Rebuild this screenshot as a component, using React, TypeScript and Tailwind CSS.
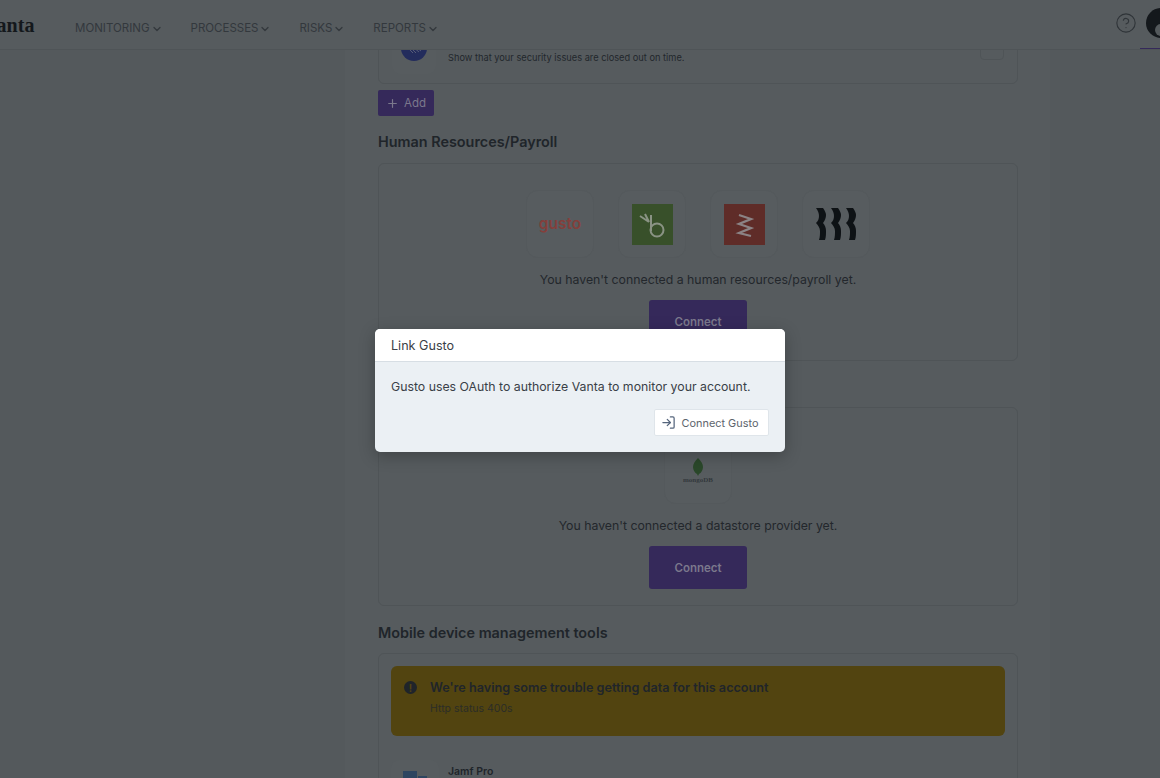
import { ChevronDown, CircleHelp, LogIn, Plus } from 'lucide-react';

const navItems = ['MONITORING', 'PROCESSES', 'RISKS', 'REPORTS'];

function Tile({ children }: { children: React.ReactNode }) {
  return (
    <div className="flex h-[68px] w-[68px] items-center justify-center rounded-xl border border-[#54595c] bg-[#575c5f]">
      {children}
    </div>
  );
}

function ConnectButton() {
  return (
    <button className="h-[43px] w-[98px] rounded-[3px] bg-[#35295a] pt-[3px] text-[11.5px] font-semibold text-[#7b788c]">
      Connect
    </button>
  );
}

function Heading({ children }: { children: React.ReactNode }) {
  return <h2 className="text-[14.4px] leading-[20px] font-semibold text-[#20252a]">{children}</h2>;
}

export default function App() {
  return (
    <div className="relative h-[778px] w-[1160px] overflow-hidden bg-[#54595c] font-['Inter',sans-serif]">
      <header className="relative z-10 flex h-[50px] items-center border-b border-[#4f5457] bg-[#565b5e]">
        <div className="-ml-[16px] w-[51px] font-['Liberation_Serif',serif] text-[20px] leading-none font-bold text-[#14181c]">
          Vanta
        </div>
        <nav className="mt-[9px] ml-[40px] flex gap-[28px]">
          {navItems.map((label) => (
            <div key={label} className="flex items-center text-[11.5px] text-[#33383d]">
              {label}
              <ChevronDown size={12} strokeWidth={2.5} className="ml-[1px]" />
            </div>
          ))}
        </nav>
        <div className="ml-auto flex items-center">
          <CircleHelp size={22} strokeWidth={1.2} className="mr-[9px] -mt-[3px] text-[#2f3438]" />
          <div className="relative -mr-[16px] -mt-[4px] h-[30px] w-[30px] overflow-hidden rounded-full bg-[#14181c]">
            <div className="absolute top-[16px] left-[9px] h-[12px] w-[18px] rounded-full bg-[#54595c]" />
          </div>
        </div>
        <div className="absolute right-0 bottom-0 h-[1px] w-[20px] bg-[#35295a]" />
      </header>

      <div className="flex">
        <div className="h-[728px] w-[345px]" />
        <main className="h-[728px] w-[705px] bg-[#565b5e] pl-[33px]">
          <div className="w-[640px]">
            <section className="-mt-[30px] flex h-[64px] items-center rounded-b-md border border-[#4f5457] pl-[13px]">
              <div className="flex h-[44px] w-[44px] items-start justify-center rounded-lg bg-[#575c5f] pt-[5px]">
                <svg width="26" height="26" viewBox="0 0 26 26">
                  <circle cx="13" cy="13" r="13" fill="#232c5c" />
                  <path d="M6 12l6 6M9 12l6 6M12 12l6 5M15 12l5 4" stroke="#565b78" strokeWidth="1" />
                </svg>
              </div>
              <div className="mt-[12px] ml-[12px] text-[9.25px] text-[#22272c]">
                Show that your security issues are closed out on time.
              </div>
              <div className="mt-[-8px] mr-[13px] ml-auto flex h-[24px] w-[24px] items-center justify-center rounded-[4px] border border-[#4f5457] pb-[4px] text-[10px] leading-[10px] font-bold text-[#33383d]">
                ...
              </div>
            </section>

            <button className="mt-[6px] flex h-[26px] w-[56px] items-center justify-center gap-[5px] rounded-[2px] bg-[#35295a] pt-[1px] text-[11.5px] text-[#7b788c]">
              <Plus size={13} strokeWidth={2.2} />
              Add
            </button>

            <div className="mt-[16px]">
              <Heading>Human Resources/Payroll</Heading>
            </div>
            <section className="mt-[11px] flex h-[198px] flex-col items-center rounded-md border border-[#4f5457] pt-[26px]">
              <div className="flex gap-[24px]">
                <Tile>
                  <span className="text-[15.5px] font-semibold text-[#843f3b]">gusto</span>
                </Tile>
                <Tile>
                  <div className="flex h-[41px] w-[41px] items-center justify-center bg-[#38502a]">
                    <svg width="41" height="41" viewBox="0 0 41 41" fill="none" stroke="#8a9384" strokeWidth="2">
                      <path d="M19 11v16" />
                      <circle cx="25" cy="26" r="6.5" />
                      <path d="M8 12l9 6M13 10l4 8" />
                    </svg>
                  </div>
                </Tile>
                <Tile>
                  <div className="flex h-[41px] w-[41px] items-center justify-center bg-[#5f2c28]">
                    <svg width="41" height="41" viewBox="0 0 41 41" fill="none" stroke="#8b8385" strokeWidth="2.3">
                      <path d="M15 11l12 4-12 5 12 4-12 5 12 3" />
                    </svg>
                  </div>
                </Tile>
                <Tile>
                  <svg width="42" height="32" viewBox="0 0 42 32" fill="#0e1215">
                    <path d="M1 0h7c2 3 3 5 3 7 0 3-1 5-3 8 2 2 3 5 3 8 0 3 0 6-1 9H4c1-3 1-6 1-9 0-3-2-6-4-8 2-2 3-4 3-7 0-3-1-5-3-8z" />
                    <path d="M16 0h7c2 3 3 5 3 7 0 3-1 5-3 8 2 2 3 5 3 8 0 3 0 6-1 9h-6c1-3 1-6 1-9 0-3-2-6-4-8 2-2 3-4 3-7 0-3-1-5-3-8z" />
                    <path d="M31 0h7c2 3 3 5 3 7 0 3-1 5-3 8 2 2 3 5 3 8 0 3 0 6-1 9h-6c1-3 1-6 1-9 0-3-2-6-4-8 2-2 3-4 3-7 0-3-1-5-3-8z" />
                  </svg>
                </Tile>
              </div>
              <p className="mt-[12px] text-[12.3px] leading-[20px] text-[#23272c]">
                You haven't connected a human resources/payroll yet.
              </p>
              <div className="mt-[10px]">
                <ConnectButton />
              </div>
            </section>

            <div className="mt-[16px]">
              <Heading>Datastores</Heading>
            </div>
            <section className="mt-[10px] flex h-[199px] flex-col items-center rounded-md border border-[#4f5457] pt-[28px]">
              <Tile>
                <div className="mt-[2px] flex flex-col items-center">
                  <svg width="12" height="18" viewBox="0 0 12 18" fill="#2a482a">
                    <path d="M6 0c3 3 5 6 5 9s-2 6-4 7l-1 2-1-2c-2-1-4-4-4-7s2-6 5-9z" />
                  </svg>
                  <span className="font-['Liberation_Serif',serif] text-[7px] leading-[8px] font-bold text-[#33383c]">mongoDB</span>
                </div>
              </Tile>
              <p className="mt-[12px] text-[12.3px] leading-[20px] text-[#23272c]">
                You haven't connected a datastore provider yet.
              </p>
              <div className="mt-[10px]">
                <ConnectButton />
              </div>
            </section>

            <div className="mt-[17px]">
              <Heading>Mobile device management tools</Heading>
            </div>
            <section className="mt-[10px] h-[200px] rounded-md border border-[#4f5457] px-[12px] pt-[12px]">
              <div className="flex h-[70px] rounded-md bg-[#524410] pt-[14px] pl-[13px]">
                <div className="mt-[1px] flex h-[13px] w-[13px] items-center justify-center rounded-full bg-[#1f242a] text-[10px] leading-none font-bold text-[#524410]">
                  !
                </div>
                <div className="ml-[13px]">
                  <div className="text-[12.65px] leading-[16px] font-semibold text-[#20252a]">
                    We're having some trouble getting data for this account
                  </div>
                  <div className="mt-[6px] text-[10.5px] leading-[14px] text-[#2b2d27]">Http status 400s</div>
                </div>
              </div>
              <div className="mt-[24px] flex">
                <div className="flex h-[48px] w-[48px] items-start justify-center gap-[1px] rounded-lg bg-[#575c5f] pt-[11px]">
                  <div className="h-[20px] w-[14px] bg-[#2e4560]" />
                  <div className="mt-[5px] h-[15px] w-[9px] bg-[#2e4560]" />
                </div>
                <div className="mt-[5px] ml-[9px] text-[10.5px] leading-[14px] font-semibold text-[#20252a]">Jamf Pro</div>
              </div>
            </section>
          </div>
        </main>
      </div>

      <div className="absolute inset-0 z-20 flex items-center justify-center pt-[3px]">
        <div className="w-[410px] overflow-hidden rounded-[5px] bg-[#ebf0f4] shadow-[0_4px_16px_rgba(0,0,0,0.25)]">
          <div className="flex h-[33px] items-center border-b border-[#d7dee4] bg-white pt-[3px] pl-[16px] text-[12.6px] text-[#3a4047]">
            Link Gusto
          </div>
          <div className="px-[16px] pt-[15px] pb-[16px]">
            <p className="text-[12.3px] leading-[20px] whitespace-nowrap text-[#3a4047]">
              Gusto uses OAuth to authorize Vanta to monitor your account.
            </p>
            <div className="mt-[12px] flex justify-end">
              <button className="flex h-[27px] w-[115px] items-center justify-center gap-[6px] rounded-[2px] border border-[#dfe5ea] bg-white pr-[4px] text-[10.9px] text-[#5d646c]">
                <LogIn size={15} className="text-[#55657c]" />
                <span className="pt-[1px]">Connect Gusto</span>
              </button>
            </div>
          </div>
        </div>
      </div>
    </div>
  );
}
